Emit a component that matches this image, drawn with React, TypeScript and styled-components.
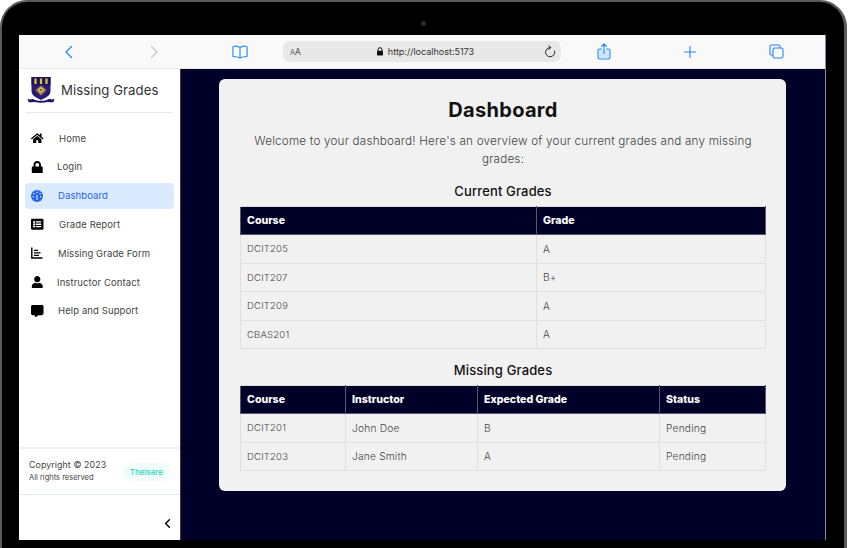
import React from "react";
import styled, { createGlobalStyle } from "styled-components";
import { FaHome, FaLock, FaListAlt, FaUser, FaCommentAlt } from "react-icons/fa";
import { ChevronLeft } from "lucide-react";

const Global = createGlobalStyle`
  html, body { margin: 0; padding: 0; background: #fff; overflow: hidden; }
  body { font-family: Inter, "Open Sans", "Liberation Sans", sans-serif; }
  * { box-sizing: border-box; }
`;

const Device = styled.div`
  width: 847px;
  height: 548px;
  background: #000;
  border: solid #5a5a5c;
  border-width: 2px 3px 0 2px;
  border-radius: 27px 27px 0 0;
  padding: 33px 18px 8px 17px;
  position: relative;
`;
const Camera = styled.span`
  position: absolute;
  top: 19px;
  left: 419px;
  width: 5px;
  height: 5px;
  border-radius: 50%;
  background: #2a2a2c;
`;
const Screen = styled.div`
  height: 100%;
  display: flex;
  flex-direction: column;
  border-right: 1px solid #8a8a9a;
`;
const Toolbar = styled.header`
  height: 34px;
  flex: none;
  display: flex;
  align-items: center;
  padding: 0 6px;
  background: #f9f9f9;
  border-bottom: 1px solid #e6e6e6;
`;
const ToolSlot = styled.div`
  width: 86px;
  display: flex;
  justify-content: center;
  align-items: center;
`;
const AddressBar = styled.div`
  width: 278px;
  height: 21px;
  border-radius: 7px;
  background: #e8e8e8;
  display: grid;
  grid-template-columns: 1fr auto 1fr;
  align-items: center;
  padding: 0 5px 0 7px;
  color: #333;
`;
const TextSize = styled.span`
  font-size: 9px;
  color: #555;
  & > small { font-size: 7px; }
`;
const Url = styled.span`
  display: flex;
  align-items: center;
  gap: 4px;
  font-size: 9px;
  color: #333;
  margin-left: 4px;
`;
const Reload = styled.span`
  justify-self: end;
  display: flex;
`;
const Body = styled.div`
  flex: 1;
  display: flex;
  min-height: 0;
`;
const Sidebar = styled.aside`
  width: 162px;
  flex: none;
  background: #fff;
  border-right: 1px solid #3c3c5e;
  display: flex;
  flex-direction: column;
`;
const Brand = styled.div`
  height: 44px;
  margin: 0 7px;
  display: flex;
  align-items: center;
  gap: 6px;
  padding: 0 0 2px 1px;
  border-bottom: 1px solid #e2e8f0;
`;
const BrandTitle = styled.span`
  font-size: 13.2px;
  color: #333;
  letter-spacing: 0.05px;
`;
const Nav = styled.nav`
  display: flex;
  flex-direction: column;
  gap: 2.8px;
  margin: 12.2px 6px 0;
`;
const NavItem = styled.a<{ $active?: boolean; $gap: number }>`
  height: 26px;
  display: flex;
  align-items: center;
  gap: ${(p) => p.$gap}px;
  padding-left: 6px;
  border-radius: 4px;
  font-size: 9.5px;
  letter-spacing: 0.1px;
  color: ${(p) => (p.$active ? "#2563eb" : "#444")};
  background: ${(p) => (p.$active ? "#dbeafe" : "transparent")};
`;
const NavIcon = styled.span<{ $active?: boolean }>`
  width: 14px;
  display: flex;
  justify-content: flex-start;
  color: ${(p) => (p.$active ? "#2563eb" : "#000")};
  font-size: 12.5px;
`;
const Footer = styled.div`
  margin-top: auto;
  height: 48px;
  display: flex;
  align-items: center;
  justify-content: space-between;
  padding: 0 10px;
  border-top: 2px solid #eef0f6;
  border-bottom: 1px solid #e2e8f0;
`;
const Copy = styled.div`
  display: flex;
  flex-direction: column;
  gap: 3px;
  padding-bottom: 3px;
  color: #444;
`;
const CopyMain = styled.span`
  font-size: 8.8px;
  letter-spacing: 0.1px;
`;
const CopySub = styled.span`
  font-size: 7.5px;
`;
const Badge = styled.span`
  height: 18px;
  padding: 0 7px;
  border-radius: 9px;
  display: flex;
  align-items: center;
  background: #f0fdf9;
  color: #2dd4bf;
  font-size: 8px;
  font-weight: 500;
`;
const Collapse = styled.div`
  height: 45px;
  flex: none;
  display: flex;
  align-items: center;
  justify-content: flex-end;
  padding: 12px 5px 0 0;
  color: #000;
`;
const Main = styled.main`
  flex: 1;
  background: #000028;
  padding: 10px 39px 0 38px;
`;
const Card = styled.section`
  height: 412px;
  background: #f1f1f1;
  border-radius: 6px;
  padding: 19px 20px 0 21px;
  text-align: center;
  color: #111;
`;
const Title = styled.h1`
  margin: 0;
  font-size: 20px;
  line-height: 24px;
  font-weight: 700;
  letter-spacing: 0.3px;
`;
const Intro = styled.p`
  margin: 11px 0 0;
  font-size: 11.7px;
  line-height: 17.5px;
  font-weight: 300;
  color: #444;
  letter-spacing: 0.2px;
`;
const SectionTitle = styled.h2<{ $top: number }>`
  margin: ${(p) => p.$top}px 0 0;
  font-size: 13px;
  line-height: 18px;
  font-weight: 500;
  letter-spacing: 0.15px;
  color: #111;
`;
const Table = styled.table`
  width: 100%;
  margin-top: 6px;
  border-collapse: collapse;
  table-layout: fixed;
  text-align: left;
`;
const Th = styled.th<{ $w?: number }>`
  width: ${(p) => (p.$w ? `${p.$w}px` : "auto")};
  height: 28px;
  padding: 0 6px;
  background: #000028;
  color: #fff;
  font-size: 10.6px;
  font-weight: 800;
  border: 1px solid #56566e;
  border-top-color: #dcdce0;
`;
const Td = styled.td<{ $code?: boolean }>`
  height: 28.5px;
  padding: 0 6px;
  font-size: ${(p) => (p.$code ? "9.5px" : "10.2px")};
  font-weight: 300;
  letter-spacing: 0.2px;
  color: #444;
  border: 1px solid #e0e0e0;
`;

const Svg = styled.svg`
  display: block;
  fill: none;
  stroke-linecap: round;
  stroke-linejoin: round;
`;

const blue = "#1e88ff";

const Crest = () => (
  <svg width="28" height="27" viewBox="0 0 28 27" style={{ flex: "none" }}>
    <path d="M4.500 1h19v14c0 4.500-4.500 6.500-9.500 9-5-2.500-9.500-4.500-9.500-9z" fill="#2c1a78" />
    <rect x="4.500" y="1" width="19" height="8" fill="#1c1260" />
    <path d="M8.500 2.500v5.500M14 2.500v5.500M19.500 2.500v5.500" stroke="#e6c23a" strokeWidth="2.200" />
    <path d="M14 9.500l5.500 4.500-5.500 5.500-5.500-5.500z" fill="#a98a3c" />
    <circle cx="14" cy="14" r="2.400" fill="#d8b860" />
    <circle cx="14" cy="14" r="1" fill="#5a4a50" />
    <path d="M0.500 22.500c3 2 4 0 6 .8 4 2 11 2 15 0 2-.8 3 1.200 6-.8l-1 3.500c-3 .8-4-.5-6 0-4 1-9 1-13 0-2-.5-3 .8-6 0z" fill="#1c1268" />
  </svg>
);

const Back = ({ color }: { color: string }) => (
  <Svg width="9" height="14" viewBox="0 0 9 14" stroke={color} strokeWidth="1.300">
    <path d="M7.500 1.500L2 7l5.500 5.500" />
  </Svg>
);
const Forward = ({ color }: { color: string }) => (
  <Svg width="9" height="14" viewBox="0 0 9 14" stroke={color} strokeWidth="1.300">
    <path d="M1.500 1.500L7 7l-5.500 5.500" />
  </Svg>
);
const Book = () => (
  <Svg width="16" height="14" viewBox="0 0 16 14" stroke={blue} strokeWidth="1.100">
    <path d="M8 2.600C6.800 1.400 4.500 1 1.800 1.200c-.6 0-.9.4-.9.9v9c0 .5.3.8.9.7 2.700-.2 5 .1 6.200 1.300 1.200-1.200 3.500-1.500 6.200-1.300.6.1.9-.2.9-.7v-9c0-.5-.3-.9-.9-.9C11.500 1 9.200 1.400 8 2.600zM8 2.600V13" />
  </Svg>
);
const Share = () => (
  <Svg width="14" height="17" viewBox="0 0 14 17" stroke={blue} strokeWidth="1.100">
    <path d="M4.500 6H2.500C1.600 6 1 6.600 1 7.500v6.800C1 15.300 1.600 16 2.500 16h9c.9 0 1.500-.7 1.500-1.700V7.500C13 6.600 12.400 6 11.500 6H9.500M7 10.500V1M4.500 3.300L7 1l2.500 2.300" />
    <path d="M2 7h10v8H2z" fill={blue} fillOpacity="0.18" stroke="none" />
  </Svg>
);
const Plus = () => (
  <Svg width="12" height="12" viewBox="0 0 12 12" stroke={blue} strokeWidth="1.100">
    <path d="M6 .5v11M.5 6h11" />
  </Svg>
);
const Tabs = () => (
  <Svg width="15" height="15" viewBox="0 0 15 15" stroke={blue} strokeWidth="1.100">
    <path d="M3.500 11H2.500C1.600 11 1 10.400 1 9.500v-7C1 1.600 1.600 1 2.500 1h7c.9 0 1.500.6 1.500 1.500v1" />
    <rect x="4" y="4" width="10" height="10" rx="1.800" />
  </Svg>
);
const Padlock = () => (
  <svg width="8" height="9" viewBox="0 0 8 9">
    <path d="M2 4V2.700a2 2 0 014 0V4" fill="none" stroke="#111" strokeWidth="1" />
    <rect x="1" y="3.800" width="6" height="4.800" rx="0.800" fill="#111" />
  </svg>
);
const ReloadIcon = () => (
  <Svg width="12" height="13" viewBox="0 0 12 13" stroke="#222" strokeWidth="1">
    <path d="M6.500 2.600A4.600 4.600 0 1 0 10.600 6M4.800 .7l1.900 1.900-1.900 1.900" />
  </Svg>
);
const GaugeIcon = () => (
  <svg width="12" height="12" viewBox="0 0 12 12">
    <circle cx="6" cy="6" r="6" fill="currentColor" />
    <path d="M6 5.500V9.500" stroke="#dbeafe" strokeWidth="1.200" strokeLinecap="round" />
    <circle cx="6" cy="2.200" r="0.800" fill="#dbeafe" />
    <circle cx="2.900" cy="3.800" r="0.800" fill="#dbeafe" />
    <circle cx="9.100" cy="3.800" r="0.800" fill="#dbeafe" />
    <circle cx="2.200" cy="6.800" r="0.800" fill="#dbeafe" />
    <circle cx="9.800" cy="6.800" r="0.800" fill="#dbeafe" />
  </svg>
);
const ChartIcon = () => (
  <svg width="12" height="12" viewBox="0 0 12 12">
    <path d="M.8 .5V11H11.500" fill="none" stroke="currentColor" strokeWidth="1.400" />
    <path d="M3 3.400H7M3 5.900H9.500M3 8.400H8" stroke="currentColor" strokeWidth="1.200" />
  </svg>
);

const navItems = [
  { label: "Home", Icon: FaHome, gap: 14 },
  { label: "Login", Icon: FaLock, gap: 12 },
  { label: "Dashboard", Icon: GaugeIcon, gap: 13, active: true },
  { label: "Grade Report", Icon: FaListAlt, gap: 14 },
  { label: "Missing Grade Form", Icon: ChartIcon, gap: 13 },
  { label: "Instructor Contact", Icon: FaUser, gap: 12 },
  { label: "Help and Support", Icon: FaCommentAlt, gap: 13 },
];

const current = [
  ["DCIT205", "A"],
  ["DCIT207", "B+"],
  ["DCIT209", "A"],
  ["CBAS201", "A"],
];
const missing = [
  ["DCIT201", "John Doe", "B", "Pending"],
  ["DCIT203", "Jane Smith", "A", "Pending"],
];

export default function App() {
  return (
    <>
      <Global />
      <Device>
        <Camera />
        <Screen>
          <Toolbar>
            <ToolSlot><Back color={blue} /></ToolSlot>
            <ToolSlot><Forward color="#c8c8c8" /></ToolSlot>
            <ToolSlot><Book /></ToolSlot>
            <AddressBar>
              <TextSize><small>A</small>A</TextSize>
              <Url><Padlock />http://localhost:5173</Url>
              <Reload><ReloadIcon /></Reload>
            </AddressBar>
            <ToolSlot><Share /></ToolSlot>
            <ToolSlot><Plus /></ToolSlot>
            <ToolSlot><Tabs /></ToolSlot>
          </Toolbar>
          <Body>
            <Sidebar>
              <Brand>
                <Crest />
                <BrandTitle>Missing Grades</BrandTitle>
              </Brand>
              <Nav>
                {navItems.map(({ label, Icon, gap, active }) => (
                  <NavItem key={label} $active={active} $gap={gap}>
                    <NavIcon $active={active}><Icon /></NavIcon>
                    {label}
                  </NavItem>
                ))}
              </Nav>
              <Footer>
                <Copy>
                  <CopyMain>Copyright © 2023</CopyMain>
                  <CopySub>All rights reserved</CopySub>
                </Copy>
                <Badge>Thelsare</Badge>
              </Footer>
              <Collapse><ChevronLeft size={15} strokeWidth={2.4} /></Collapse>
            </Sidebar>
            <Main>
              <Card>
                <Title>Dashboard</Title>
                <Intro>Welcome to your dashboard! Here's an overview of your current grades and any missing grades:</Intro>
                <SectionTitle $top={14}>Current Grades</SectionTitle>
                <Table>
                  <thead>
                    <tr><Th $w={296}>Course</Th><Th>Grade</Th></tr>
                  </thead>
                  <tbody>
                    {current.map((r) => (
                      <tr key={r[0]}>{r.map((c, i) => <Td key={c} $code={i === 0}>{c}</Td>)}</tr>
                    ))}
                  </tbody>
                </Table>
                <SectionTitle $top={12}>Missing Grades</SectionTitle>
                <Table>
                  <thead>
                    <tr><Th $w={105}>Course</Th><Th $w={132}>Instructor</Th><Th $w={182}>Expected Grade</Th><Th>Status</Th></tr>
                  </thead>
                  <tbody>
                    {missing.map((r) => (
                      <tr key={r[0]}>{r.map((c, i) => <Td key={c} $code={i === 0}>{c}</Td>)}</tr>
                    ))}
                  </tbody>
                </Table>
              </Card>
            </Main>
          </Body>
        </Screen>
      </Device>
    </>
  );
}
